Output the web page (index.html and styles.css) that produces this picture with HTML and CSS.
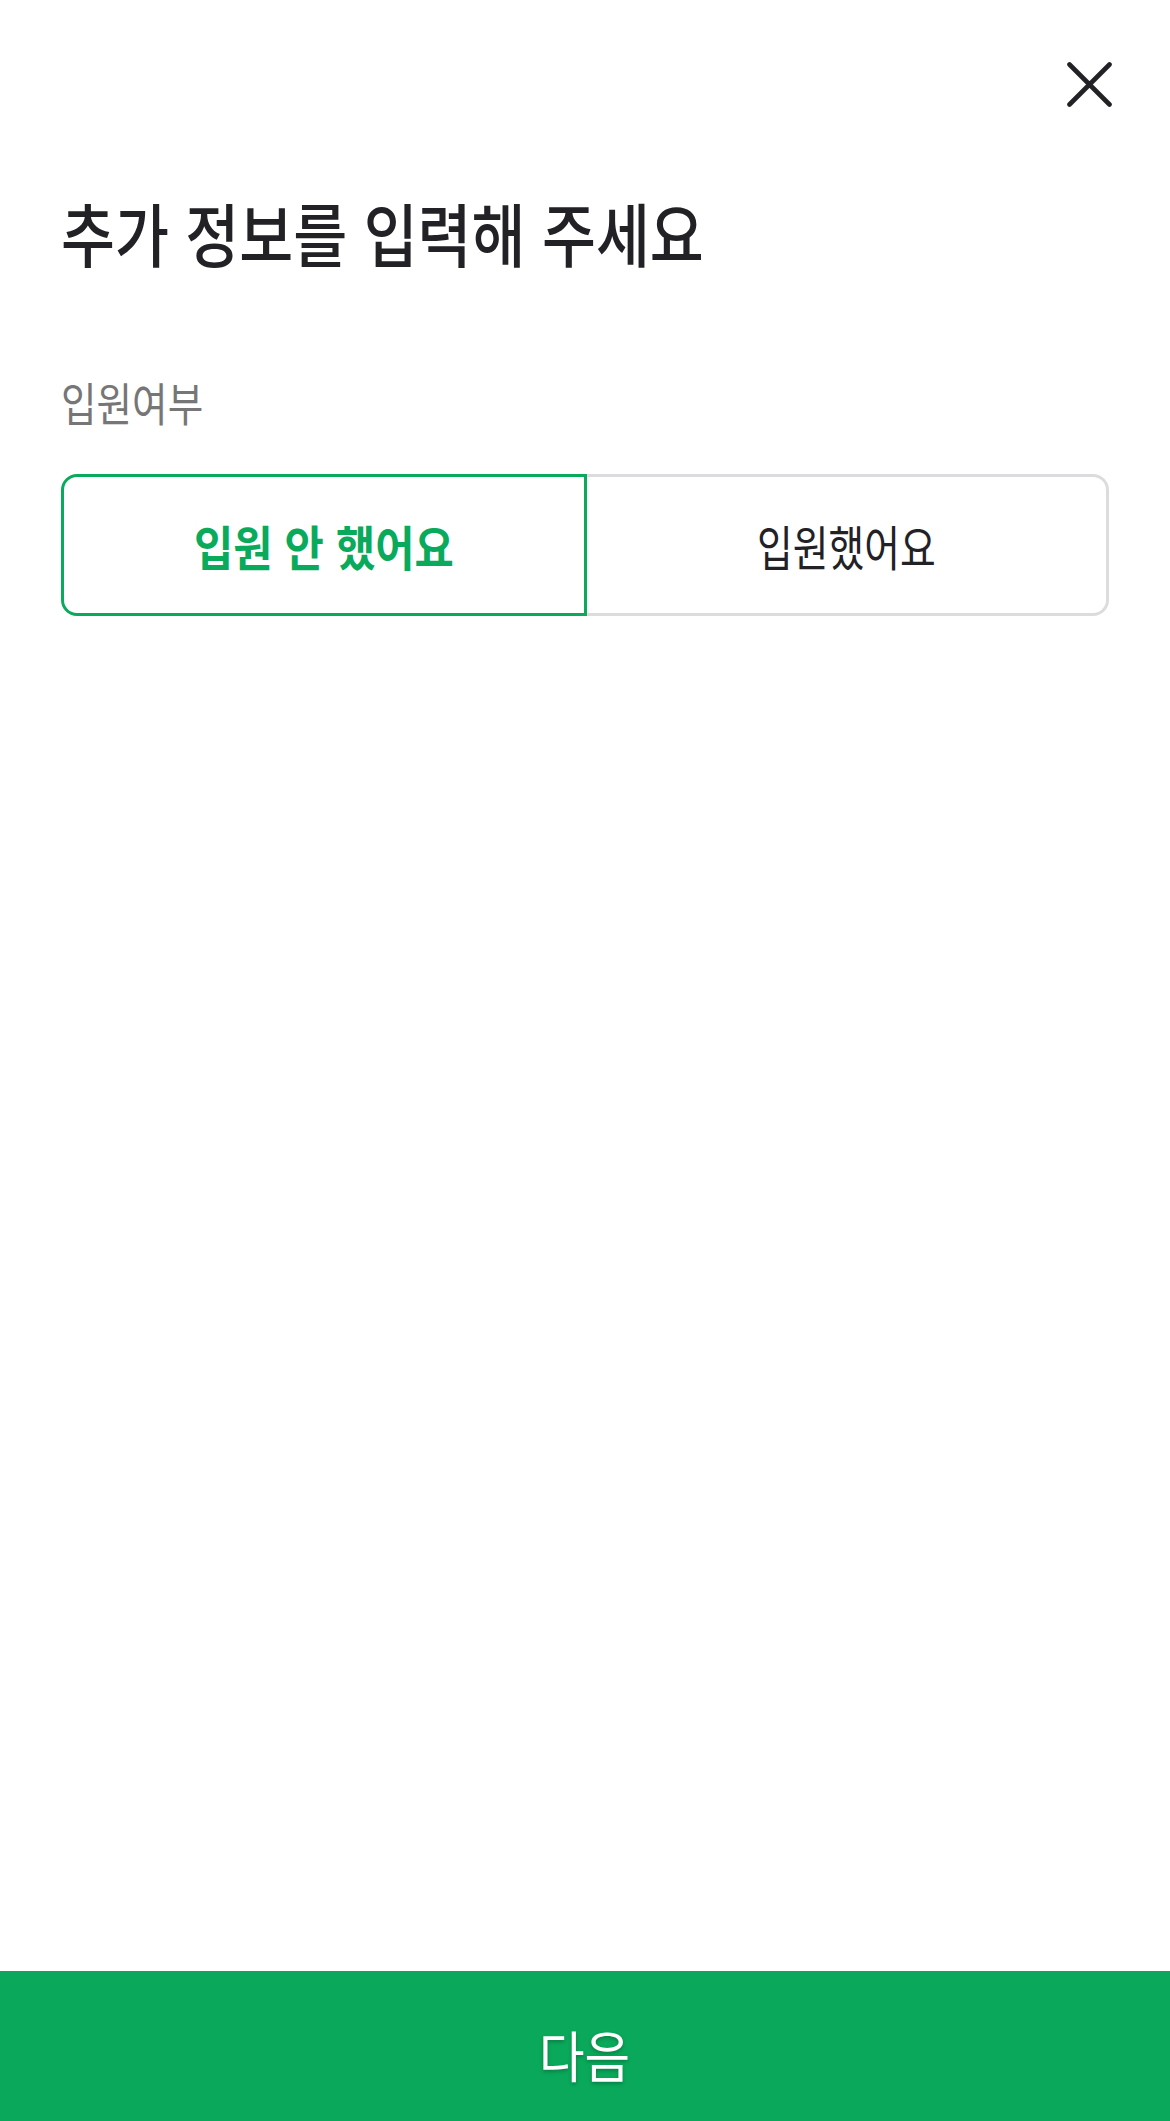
FILE: index.html
```html
<!DOCTYPE html>
<html lang="ko">
<head>
  <meta charset="UTF-8" />
  <meta name="viewport" content="width=device-width, initial-scale=1.0"/>
  <title>추가 정보 입력</title>
  <link rel="stylesheet" href="styles.css">
</head>
<body>

  <div class="screen">
    <header class="top">
      <button class="close" aria-label="닫기">
        <svg viewBox="0 0 45 45" width="45" height="45">
          <path d="M2.5 2.5 L42.5 42.5 M42.5 2.5 L2.5 42.5" stroke="#222226" stroke-width="4.6" stroke-linecap="round" fill="none"/>
        </svg>
      </button>
    </header>

    <main class="content">
      <h1 class="title"><span>추가 정보를 입력해 주세요</span></h1>

      <p class="label"><span>입원여부</span></p>

      <div class="segment">
        <button class="option selected"><span>입원 안 했어요</span></button>
        <button class="option"><span>입원했어요</span></button>
      </div>
    </main>

    <button class="next"><span>다음</span></button>
  </div>

</body>
</html>
```

FILE: styles.css
```css
body {
  margin: 0;
  background-color: #ffffff;
  font-family: "Noto Sans CJK KR", "Noto Sans", sans-serif;
  color: #222226;
}

.screen {
  width: 1170px;
  height: 2121px;
  display: flex;
  flex-direction: column;
  overflow: hidden;
}

button {
  font-family: inherit;
  background: none;
  border: none;
  padding: 0;
  margin: 0;
  cursor: pointer;
}

/* narrow glyphs like the device font */
.title span,
.label span,
.option span,
.next span {
  display: inline-block;
}

.title span {
  transform: scaleX(0.85);
  transform-origin: left center;
}

.label span {
  transform: scaleX(0.84);
  transform-origin: left center;
}

.top {
  display: flex;
  justify-content: flex-end;
  padding: 62px 58px 0 0;
  height: 120px;
}

.close {
  width: 45px;
  height: 45px;
  display: block;
}

.close svg {
  display: block;
}

.content {
  flex: 1;
  padding: 0 61px;
}

.title {
  margin: 0;
  font-size: 69px;
  font-weight: 500;
  line-height: 100px;
  color: #222226;
}

.label {
  margin: 89px 0 0;
  font-size: 46px;
  font-weight: 400;
  line-height: 60px;
  color: #767676;
}

.segment {
  display: flex;
  margin-top: 43px;
}

.option {
  flex: 1;
  height: 142px;
  box-sizing: border-box;
  border: 3px solid #dcdcde;
  font-size: 48px;
  font-weight: 400;
  color: #222226;
  background-color: #ffffff;
}

.option span {
  transform: scaleX(0.81);
}

.option:first-child {
  border-radius: 16px 0 0 16px;
}

.option:last-child {
  border-radius: 0 16px 16px 0;
  border-left: none;
}

.option.selected {
  border-color: #0aaa5c;
  color: #0aaa5c;
  font-weight: 700;
}

.option.selected span {
  transform: scaleX(0.89);
}

.next {
  height: 150px;
  width: 100%;
  padding-top: 14px;
  background-color: #0aa85a;
  color: #ffffff;
  font-size: 55px;
  font-weight: 400;
  text-shadow: 0 2px 4px rgba(0, 0, 0, 0.25);
}

.next span {
  transform: scaleX(0.9);
}
```
